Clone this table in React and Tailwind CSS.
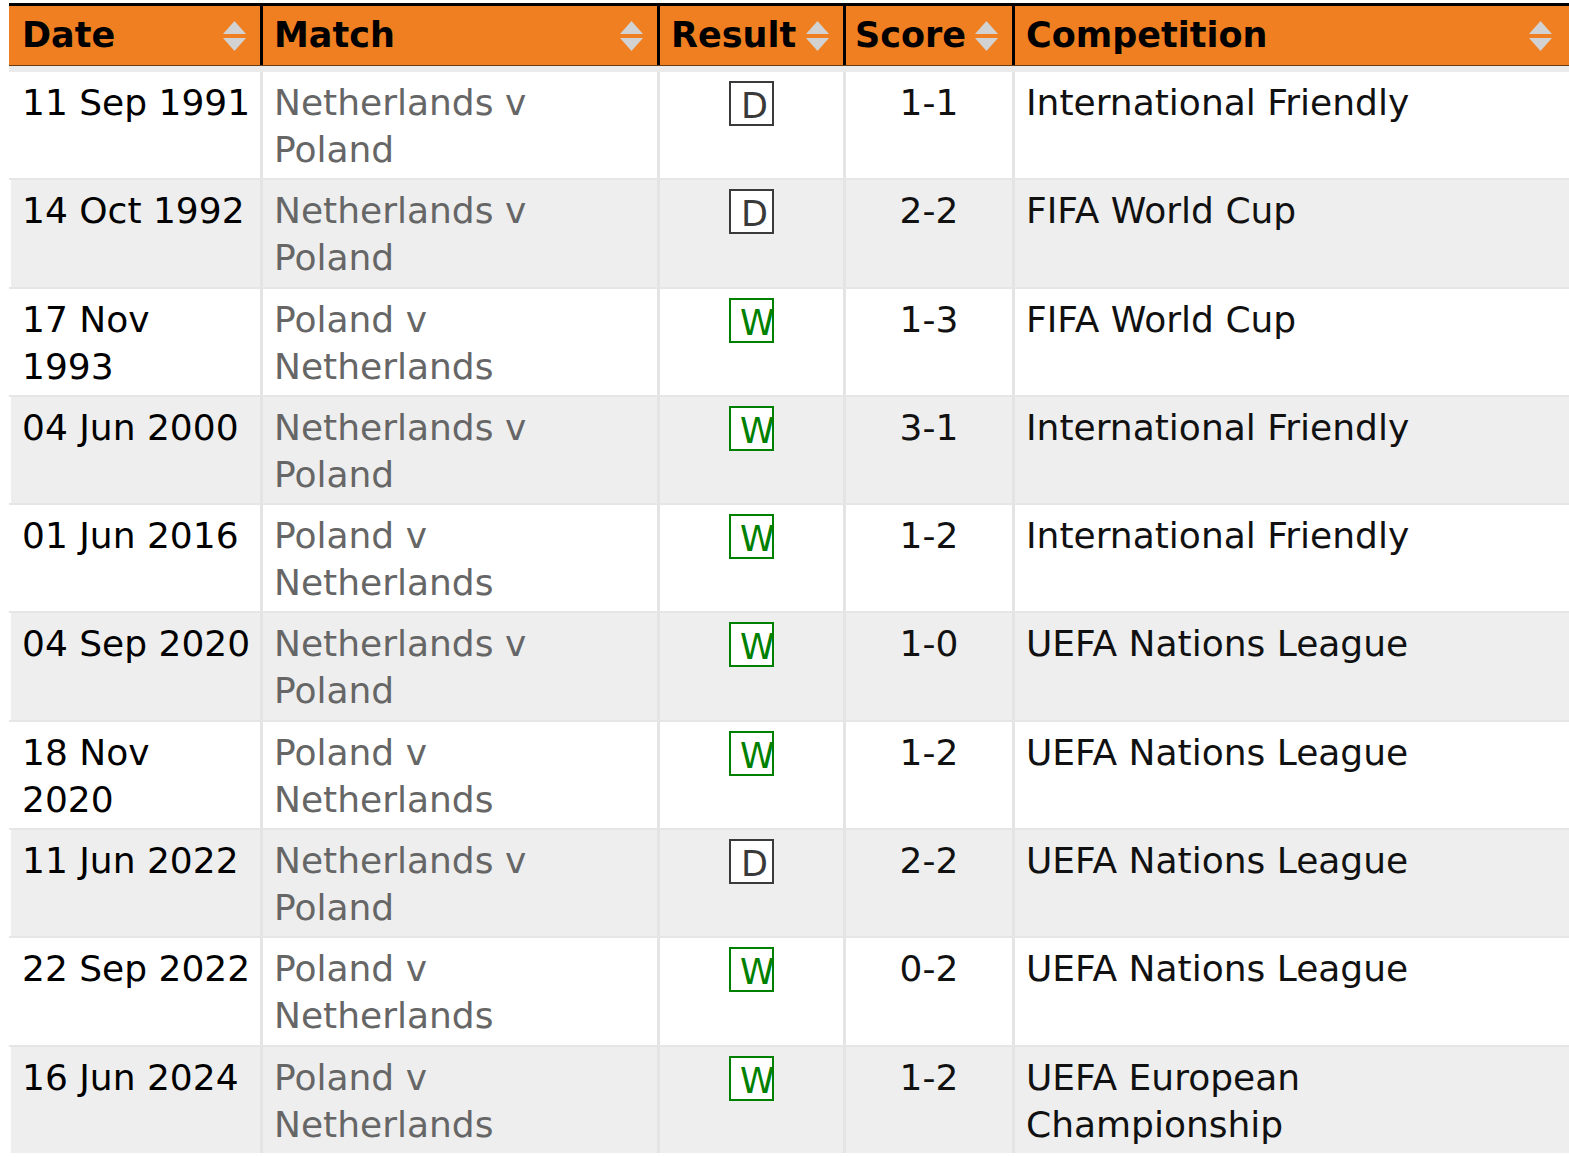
import React from 'react';

const rows = [
  { date: ['11 Sep 1991'], match: ['Netherlands v', 'Poland'], result: 'D', score: '1-1', comp: ['International Friendly'] },
  { date: ['14 Oct 1992'], match: ['Netherlands v', 'Poland'], result: 'D', score: '2-2', comp: ['FIFA World Cup'] },
  { date: ['17 Nov', '1993'], match: ['Poland v', 'Netherlands'], result: 'W', score: '1-3', comp: ['FIFA World Cup'] },
  { date: ['04 Jun 2000'], match: ['Netherlands v', 'Poland'], result: 'W', score: '3-1', comp: ['International Friendly'] },
  { date: ['01 Jun 2016'], match: ['Poland v', 'Netherlands'], result: 'W', score: '1-2', comp: ['International Friendly'] },
  { date: ['04 Sep 2020'], match: ['Netherlands v', 'Poland'], result: 'W', score: '1-0', comp: ['UEFA Nations League'] },
  { date: ['18 Nov', '2020'], match: ['Poland v', 'Netherlands'], result: 'W', score: '1-2', comp: ['UEFA Nations League'] },
  { date: ['11 Jun 2022'], match: ['Netherlands v', 'Poland'], result: 'D', score: '2-2', comp: ['UEFA Nations League'] },
  { date: ['22 Sep 2022'], match: ['Poland v', 'Netherlands'], result: 'W', score: '0-2', comp: ['UEFA Nations League'] },
  { date: ['16 Jun 2024'], match: ['Poland v', 'Netherlands'], result: 'W', score: '1-2', comp: ['UEFA European', 'Championship'] },
];

function SortIcon() {
  return (
    <svg width="23" height="30" viewBox="0 0 23 30" className="shrink-0">
      <polygon points="0,13 11.5,0 23,13" fill="#d2d2d2" />
      <polygon points="0,17 23,17 11.5,30" fill="#d2d2d2" />
    </svg>
  );
}

function HeadCell({ label, last, pl = 'pl-[11px]', pr = 'pr-[14px]' }) {
  return (
    <div className={`flex items-center justify-between ${pl} ${pr} ${last ? '' : 'border-r-[3px] border-black'}`}>
      <span className="font-bold text-black">{label}</span>
      <SortIcon />
    </div>
  );
}

function Lines({ lines }) {
  return lines.map((l, i) => <div key={i} className="whitespace-nowrap">{l}</div>);
}

function Badge({ result }) {
  const win = result === 'W';
  return (
    <div
      className={`w-[45px] h-[45px] border-2 bg-white overflow-hidden pt-[6px] text-[35px] leading-none text-left ${
        win ? 'border-[#008000] text-[#008000] pl-[9px]' : 'border-[#3a3a3a] text-[#3a3a3a] pl-[10px]'
      }`}
    >
      {result}
    </div>
  );
}

export default function App() {
  return (
    <div className="min-h-screen bg-white pt-[3px] pl-[9px] text-[36px] leading-[47px]" style={{ fontFamily: '"DejaVu Sans", Verdana, sans-serif' }}>
      {/* 헤더 */}
      <div className="border-t-[3px] border-black bg-[#ef7f20] border-b border-b-[#6a3a12] grid grid-cols-[254px_397px_186px_169px_1fr] h-[63px] text-[35px]">
        <HeadCell label="Date" pl="pl-[13px]" />
        <HeadCell label="Match" />
        <HeadCell label="Result" />
        <HeadCell label="Score" pl="pl-[9px]" />
        <HeadCell label="Competition" last pr="pr-[17px]" />
      </div>
      <div className="h-[6px] bg-[#ebebeb]" />

      {/* 본문 */}
      {rows.map((r, i) => {
        const bg = i % 2 === 0 ? 'bg-white' : 'bg-[#eeeeee]';
        const cell = `${bg} pt-[7px] pb-[5.3px]`;
        return (
          <div
            key={i}
            className={`grid grid-cols-[251px_397px_186px_169px_1fr] ${i > 0 ? 'border-t-2 border-[#e6e6e6]' : ''}`}
          >
            <div className={`${cell} border-l-2 border-white pl-[11px] text-black`}>
              <Lines lines={r.date} />
            </div>
            <div className={`${cell} border-l-[3px] border-[#e4e4e4] pl-[11px] text-[#666]`}>
              <Lines lines={r.match} />
            </div>
            <div className={`${bg} border-l-[3px] border-[#e4e4e4] flex justify-center pt-[9px]`}>
              <Badge result={r.result} />
            </div>
            <div className={`${cell} border-l-[3px] border-[#e4e4e4] text-center text-[#111]`}>
              {r.score}
            </div>
            <div className={`${cell} border-l-[3px] border-[#e4e4e4] pl-[11px] text-[#111]`}>
              <Lines lines={r.comp} />
            </div>
          </div>
        );
      })}
    </div>
  );
}
